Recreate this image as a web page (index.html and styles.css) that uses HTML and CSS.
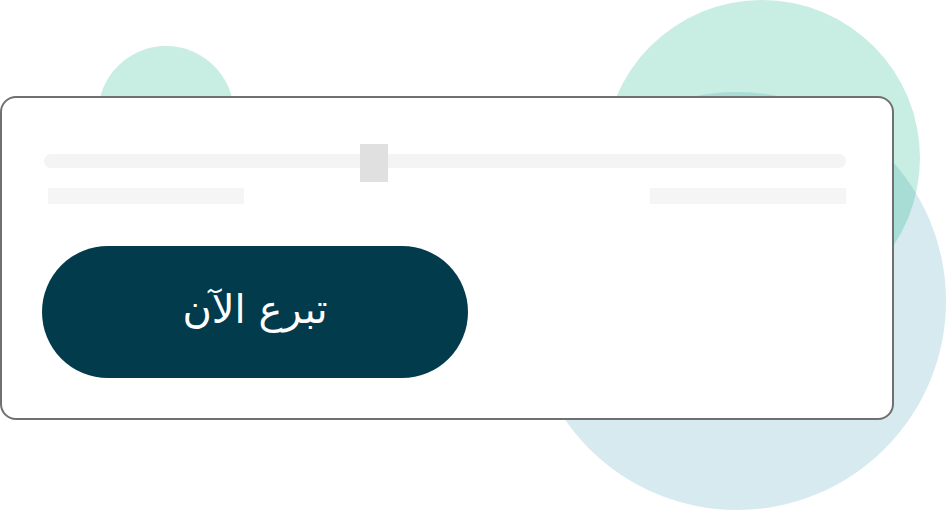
FILE: index.html
```html
<!DOCTYPE html>
<html lang="ar">
<head>
<meta charset="utf-8">
<title>تبرع الآن</title>
<link rel="stylesheet" href="styles.css">
</head>
<body>
<div class="stage">
  <div class="blob blob-small"></div>
  <div class="blob blob-blue"></div>
  <div class="blob blob-green"></div>
  <div class="card">
    <div class="slider">
      <div class="track"></div>
      <div class="thumb"></div>
    </div>
    <div class="labels">
      <div class="label"></div>
      <div class="label"></div>
    </div>
    <button class="donate" type="button"><span class="donate-text" dir="rtl">تبرع الآن</span></button>
  </div>
</div>
</body>
</html>
```
FILE: styles.css
```css
html, body {
  margin: 0;
  padding: 0;
  background: #ffffff;
}
.stage {
  position: relative;
  width: 946px;
  height: 510px;
  overflow: hidden;
  padding-top: 96px;
  box-sizing: border-box;
}
.blob {
  position: absolute;
  border-radius: 50%;
}
.blob-small {
  left: 98px;
  top: 46px;
  width: 136px;
  height: 136px;
  background: rgba(16, 177, 129, 0.23);
}
.blob-green {
  left: 604px;
  top: 0;
  width: 316px;
  height: 316px;
  background: rgba(16, 177, 129, 0.23);
}
.blob-blue {
  left: 528px;
  top: 92px;
  width: 418px;
  height: 418px;
  background: rgba(77, 164, 190, 0.23);
}
.card {
  position: relative;
  width: 894px;
  height: 324px;
  box-sizing: border-box;
  border: 2px solid #707070;
  border-radius: 16px;
  background: #ffffff;
  padding: 56px 46px 0 40px;
  display: flex;
  flex-direction: column;
}
.slider {
  position: relative;
  margin-left: 2px;
}
.track {
  height: 14px;
  border-radius: 7px;
  background: #f4f4f4;
}
.thumb {
  position: absolute;
  left: 316px;
  top: -10px;
  width: 28px;
  height: 38px;
  background: #e0e0e0;
}
.labels {
  display: flex;
  justify-content: space-between;
  margin: 20px 0 0 6px;
}
.label {
  width: 196px;
  height: 16px;
  background: #f5f5f5;
}
.donate {
  margin-top: 42px;
  width: 426px;
  height: 132px;
  border: none;
  border-radius: 66px;
  background: #023b4b;
  color: #ffffff;
  font-family: "DejaVu Sans", "Noto Sans", sans-serif;
  font-size: 40px;
  padding: 0 0 6px 0;
  display: flex;
  align-items: center;
  justify-content: center;
}
.donate-text {
  line-height: 1;
}
```
